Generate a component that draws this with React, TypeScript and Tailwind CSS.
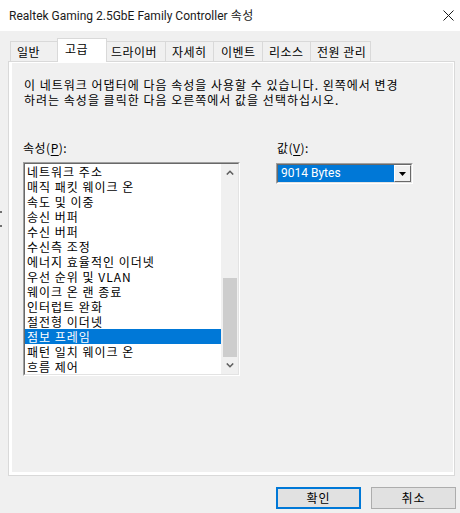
import React from "react";

const items = [
  "네트워크 주소",
  "매직 패킷 웨이크 온",
  "속도 및 이중",
  "송신 버퍼",
  "수신 버퍼",
  "수신측 조정",
  "에너지 효율적인 이더넷",
  "우선 순위 및 VLAN",
  "웨이크 온 랜 종료",
  "인터럽트 완화",
  "절전형 이더넷",
  "점보 프레임",
  "패턴 일치 웨이크 온",
  "흐름 제어",
];

const tabs = [
  { label: "일반", w: "w-[47px]", pl: "pl-[6px]" },
  { label: "고급", w: "w-[50px]", pl: "pl-[7px]", selected: true },
  { label: "드라이버", w: "w-[58px]", pl: "pl-[4px]" },
  { label: "자세히", w: "w-[48px]", pl: "pl-[6px]" },
  { label: "이벤트", w: "w-[49px]", pl: "pl-[7px]" },
  { label: "리소스", w: "w-[48px]", pl: "pl-[6px]" },
  { label: "전원 관리", w: "w-[61px]", pl: "pl-[6px]" },
];

export default function App() {
  return (
    <div className="relative flex h-[513px] w-[460px] flex-col overflow-hidden bg-[#f0f0f0] font-['Noto_Sans_CJK_KR',sans-serif] text-[12px] text-black">
      {/* Title bar */}
      <div className="flex h-[31px] shrink-0 items-center justify-between bg-white pl-[9px] pr-[6px]">
        <span className="font-['Roboto','Noto_Sans_CJK_KR',sans-serif] text-[12px] leading-[16px] text-[#1a1a1a]">
          Realtek Gaming 2.5GbE Family Controller <span className="tracking-[0.5px]">속성</span>
        </span>
        <svg width="11" height="11" viewBox="0 0 11 11">
          <path d="M0.5 0.5 L10.5 10.5 M10.5 0.5 L0.5 10.5" stroke="#1a1a1a" strokeWidth="1" />
        </svg>
      </div>

      {/* Tabs */}
      <div className="relative z-10 mt-[7px] flex h-[24px] items-end pl-[10px] tracking-[0.5px]">
        {tabs.map((t, i) =>
          t.selected ? (
            <div
              key={t.label}
              className={`${t.w} h-[24px] border border-b-0 border-[#d9d9d9] bg-white ${t.pl} pt-[1px] leading-[18px] whitespace-nowrap`}
            >
              {t.label}
            </div>
          ) : (
            <div
              key={t.label}
              className={`${t.w} mb-px h-[20px] border-t border-[#d9d9d9] ${
                i === tabs.length - 1 ? "border-r" : ""
              } ${tabs[i - 1]?.selected ? "" : "border-l"} bg-[#f0f0f0] ${t.pl} leading-[19px] whitespace-nowrap`}
            >
              {t.label}
            </div>
          )
        )}
      </div>

      {/* Panel */}
      <div className="-mt-px ml-[8px] h-[415px] w-[447px] border border-[#d9d9d9] bg-white pb-[3px] pl-[3px] pr-px pt-px">
        <div className="h-full w-full bg-[#f0f0f0]">
          <p className="ml-[12px] pt-[14px] leading-[15px] tracking-[1px] whitespace-nowrap">
            이 네트워크 어댑터에 다음 속성을 사용할 수 있습니다. 왼쪽에서 변경
            <br />
            하려는 속성을 클릭한 다음 오른쪽에서 값을 선택하십시오.
          </p>

          <div className="ml-[11px] mt-[33px] flex gap-[36px]">
            {/* Property list */}
            <div className="flex w-[217px] flex-col">
              <div className="h-[15px] leading-[15px] tracking-[0.5px]">
                속성(<span className="underline underline-offset-2">P</span>):
              </div>
              <div className="mt-[7px] border border-b-white border-l-[#a0a0a0] border-r-white border-t-[#a0a0a0]">
                <div className="flex h-[212px] border border-b-[#e3e3e3] border-l-[#696969] border-r-[#e3e3e3] border-t-[#696969] bg-white">
                  <div className="flex-1">
                    {items.map((it, i) => (
                      <div
                        key={it}
                        className={`h-[15px] pl-[2px] leading-[15px] tracking-[1px] whitespace-nowrap ${
                          i === 11 ? "bg-[#0078d7] text-white" : ""
                        }`}
                      >
                        {it}
                      </div>
                    ))}
                  </div>
                  {/* Scrollbar */}
                  <div className="flex w-[17px] flex-col bg-[#f0f0f0]">
                    <div className="flex h-[17px] items-center justify-center">
                      <svg width="8" height="5" viewBox="0 0 8 5">
                        <polyline points="0.8,4.5 4,1.3 7.2,4.5" fill="none" stroke="#606060" strokeWidth="1.6" />
                      </svg>
                    </div>
                    <div className="flex flex-1 flex-col justify-end">
                      <div className="ml-[2px] mr-px h-[79px] bg-[#cdcdcd]" />
                    </div>
                    <div className="flex h-[17px] items-center justify-center">
                      <svg width="8" height="5" viewBox="0 0 8 5">
                        <polyline points="0.8,0.5 4,3.7 7.2,0.5" fill="none" stroke="#606060" strokeWidth="1.6" />
                      </svg>
                    </div>
                  </div>
                </div>
              </div>
            </div>

            {/* Value */}
            <div className="flex w-[137px] flex-col">
              <div className="ml-px h-[15px] leading-[15px] tracking-[0.5px]">
                값(<span className="underline underline-offset-2">V</span>):
              </div>
              <div className="mt-[8px] border border-b-white border-l-[#a0a0a0] border-r-white border-t-[#a0a0a0]">
                <div className="flex h-[19px] border border-b-[#e3e3e3] border-l-[#696969] border-r-[#e3e3e3] border-t-[#696969] bg-white">
                  <div className="flex-1 bg-[#0078d7] pl-[3px] font-['Roboto','Noto_Sans_CJK_KR',sans-serif] leading-[17px] text-white">
                    9014 Bytes
                  </div>
                  <div className="flex w-[17px] items-center justify-center border border-b-[#696969] border-l-white border-r-[#696969] border-t-white bg-[#f0f0f0]">
                    <svg width="7" height="4" viewBox="0 0 7 4">
                      <polygon points="0,0 7,0 3.5,4" fill="#000" />
                    </svg>
                  </div>
                </div>
              </div>
            </div>
          </div>
        </div>
      </div>

      {/* Buttons */}
      <div className="mt-[11px] flex gap-[10px] pl-[276px] tracking-[1px]">
        <button className="flex h-[22px] w-[85px] items-center justify-center border-2 border-[#0078d7] bg-[#e1e1e1] leading-[16px]">
          확인
        </button>
        <button className="flex h-[22px] w-[85px] items-center justify-center border border-[#adadad] bg-[#e1e1e1] leading-[16px]">
          취소
        </button>
      </div>

      {/* stray edge marks from background window */}
      <span className="absolute left-0 top-[211px] h-[2px] w-[2px] bg-[#707070]" />
      <span className="absolute left-0 top-[225px] h-[2px] w-[2px] bg-[#707070]" />
    </div>
  );
}
